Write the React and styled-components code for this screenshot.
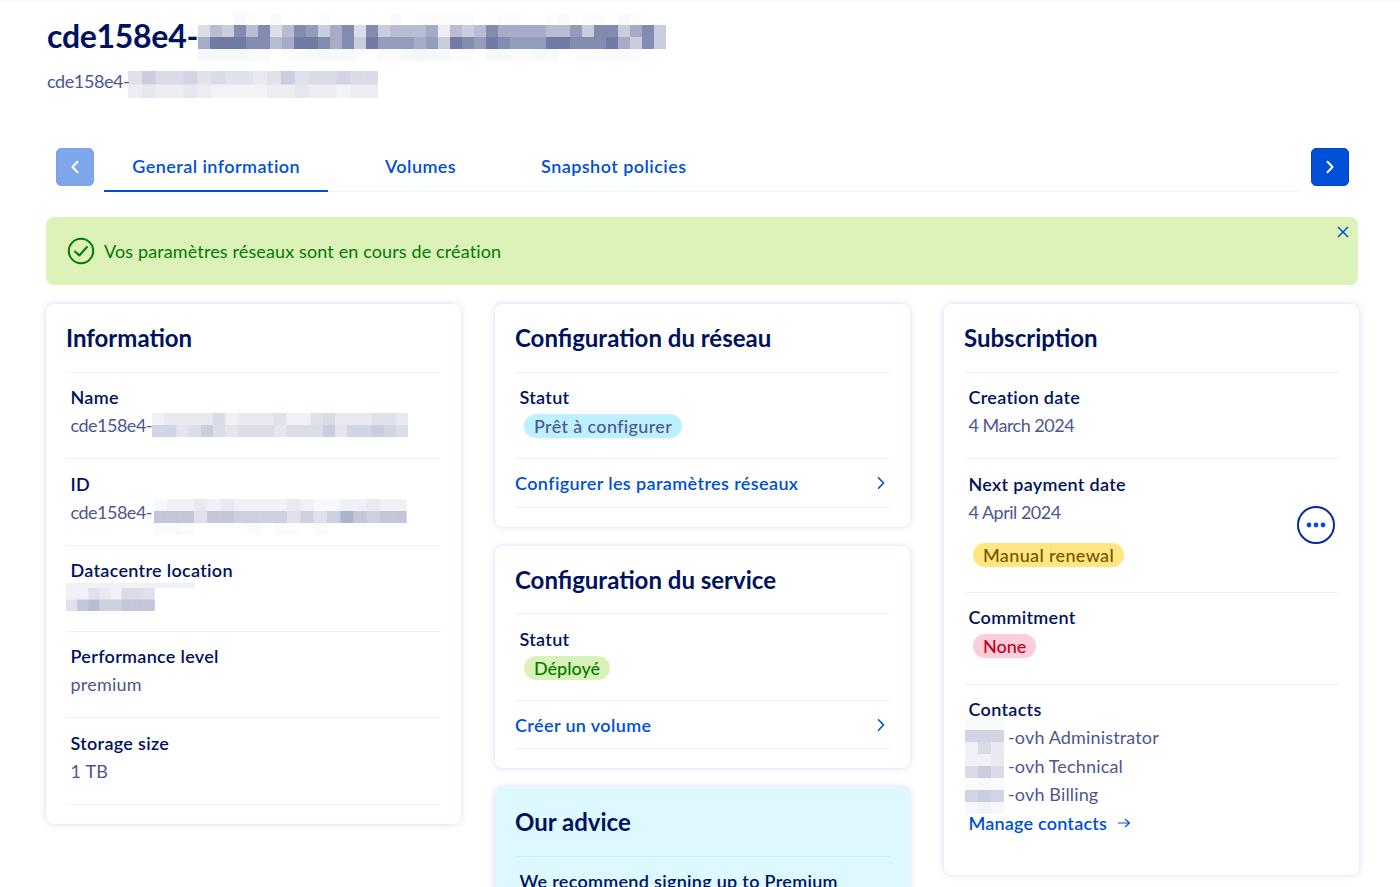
import React from "react";
import styled, { createGlobalStyle } from "styled-components";

const GlobalStyle = createGlobalStyle`
  html, body {
    margin: 0;
    padding: 0;
    background: #fff;
  }
  body {
    font-family: "Lato", "Noto Sans", sans-serif;
    color: #4d5693;
  }
  * {
    box-sizing: border-box;
  }
`;

// the blurred bits of the screenshot: each row is a step of alpha and a string of digits
const Mosaic = ({ cellW, cellH, color = "#00125e", rows, ...rest }) => {
  const width = Math.max(...rows.map((r) => r.cells.length)) * cellW;
  return (
    <MosaicSvg width={width} height={rows.length * cellH} {...rest}>
      {rows.map((row, y) =>
        row.cells.split("").map((c, x) => (
          <rect
            key={`${y}-${x}`}
            x={x * cellW}
            y={y * cellH}
            width={cellW}
            height={cellH}
            fill={color}
            fillOpacity={Number(c) * row.step}
          />
        ))
      )}
    </MosaicSvg>
  );
};

const Chevron = ({ left, weight = 1.6 }) => (
  <svg width="14" height="14" viewBox="0 0 14 14" fill="none">
    <polyline
      points={left ? "9.5,1.8 4.5,7 9.5,12.2" : "4.5,1.8 9.5,7 4.5,12.2"}
      stroke="currentColor"
      strokeWidth={weight}
      strokeLinecap="round"
      strokeLinejoin="round"
    />
  </svg>
);

const titleRows = [
  { step: 0.01, cells: "000310200010000020111110011001201102100" },
  { step: 0.07, cells: "243747247635727344451434755554463773573" },
  { step: 0.07, cells: "588877458875738666563876876668877785373" },
  { step: 0.01, cells: "333322011233310223433110332232011122100" },
];
const subtitleRows = [
  { step: 0.03, cells: "475564544347455655" },
  { step: 0.025, cells: "343343222233433233" },
];
const nameRows = [
  { step: 0.03, cells: "233335233342245333443" },
  { step: 0.035, cells: "553464344434446355654" },
];
const idRows = [
  { step: 0.03, cells: "1223232222321122322" },
  { step: 0.04, cells: "6663665555353586566" },
  { step: 0.01, cells: "2210000201102000000" },
];
const locationRows = [
  { step: 0.03, cells: "22432554" },
  { step: 0.04, cells: "36755666" },
];
const contactRows = [
  { step: 0.01, cells: "222" },
  { step: 0.03, cells: "666" },
  { step: 0.03, cells: "253" },
  { step: 0.03, cells: "223" },
  { step: 0.03, cells: "575" },
  { step: 0.01, cells: "222" },
  { step: 0.03, cells: "676" },
  { step: 0.01, cells: "353" },
];

const App = () => (
  <Page>
    <GlobalStyle />
    <TitleRow>
      <Title>cde158e4-</Title>
      <Mosaic cellW={12} cellH={12} rows={titleRows} />
    </TitleRow>
    <SubtitleRow>
      <span>cde158e4-</span>
      <Mosaic cellW={13.9} cellH={13.5} rows={subtitleRows} />
    </SubtitleRow>

    <TabBar>
      <ArrowButton disabled>
        <Chevron left weight={2} />
      </ArrowButton>
      <TabList>
        <Tab $active>General information</Tab>
        <Tab>Volumes</Tab>
        <Tab>Snapshot policies</Tab>
      </TabList>
      <ArrowButton>
        <Chevron weight={2} />
      </ArrowButton>
    </TabBar>

    <Alert>
      <svg width="28" height="28" viewBox="0 0 28 28" fill="none">
        <circle cx="14" cy="14" r="12.2" stroke="#007a00" strokeWidth="2" />
        <polyline
          points="8,14.5 12.3,18.5 20,10"
          stroke="#007a00"
          strokeWidth="2"
          strokeLinecap="round"
          strokeLinejoin="round"
        />
      </svg>
      <span>Vos paramètres réseaux sont en cours de création</span>
      <CloseButton>
        <svg width="12" height="12" viewBox="0 0 12 12">
          <path d="M1 1 L11 11 M11 1 L1 11" stroke="#0050d7" strokeWidth="1.5" />
        </svg>
      </CloseButton>
    </Alert>

    <Columns>
      <Column>
        <Card>
          <CardTitle>Information</CardTitle>
          <Item>
            <Label>Name</Label>
            <Value $tight>
              cde158e4-
              <Mosaic cellW={12.2} cellH={12} rows={nameRows} />
            </Value>
          </Item>
          <Item>
            <Label>ID</Label>
            <Value $tight>
              cde158e4-
              <IdMosaic cellW={13.3} cellH={12} rows={idRows} />
            </Value>
          </Item>
          <Item>
            <Label>Datacentre location</Label>
            <LocationBlur>
              <FaintStrip />
              <Mosaic cellW={11.1} cellH={11.5} rows={locationRows} />
            </LocationBlur>
          </Item>
          <Item>
            <Label>Performance level</Label>
            <Value>premium</Value>
          </Item>
          <Item>
            <Label>Storage size</Label>
            <Value>1 TB</Value>
          </Item>
        </Card>
      </Column>

      <Column>
        <Card>
          <CardTitle>Configuration du réseau</CardTitle>
          <Item>
            <Label>Statut</Label>
            <BadgeLine>
              <Badge $kind="info">Prêt à configurer</Badge>
            </BadgeLine>
          </Item>
          <LinkRow>
            Configurer les paramètres réseaux
            <Chevron />
          </LinkRow>
        </Card>
        <Card>
          <CardTitle>Configuration du service</CardTitle>
          <Item>
            <Label>Statut</Label>
            <BadgeLine>
              <Badge $kind="success">Déployé</Badge>
            </BadgeLine>
          </Item>
          <LinkRow>
            Créer un volume
            <Chevron />
          </LinkRow>
        </Card>
        <AdviceCard>
          <CardTitle>Our advice</CardTitle>
          <AdviceText>We recommend signing up to Premium</AdviceText>
        </AdviceCard>
      </Column>

      <Column>
        <Card>
          <CardTitle>Subscription</CardTitle>
          <Item>
            <Label>Creation date</Label>
            <Value $tight>4 March 2024</Value>
          </Item>
          <PaymentItem>
            <PaymentInfo>
              <Label>Next payment date</Label>
              <Value $tight>4 April 2024</Value>
              <RenewalLine>
                <Badge $kind="warning">Manual renewal</Badge>
              </RenewalLine>
            </PaymentInfo>
            <MenuButton>
              <svg width="20" height="6" viewBox="0 0 20 6">
                <circle cx="3" cy="3" r="2.4" fill="#0050d7" />
                <circle cx="10" cy="3" r="2.4" fill="#0050d7" />
                <circle cx="17" cy="3" r="2.4" fill="#0050d7" />
              </svg>
            </MenuButton>
          </PaymentItem>
          <CommitmentItem>
            <Label>Commitment</Label>
            <BadgeLine>
              <Badge $kind="error">None</Badge>
            </BadgeLine>
          </CommitmentItem>
          <ContactsItem>
            <Label>Contacts</Label>
            <ContactList>
              <ContactBlur>
                <Mosaic cellW={13} cellH={12} rows={contactRows} />
              </ContactBlur>
              <span>-ovh Administrator</span>
              <span>-ovh Technical</span>
              <span>-ovh Billing</span>
            </ContactList>
            <ManageLink>
              Manage contacts
              <svg width="14" height="12" viewBox="0 0 14 12" fill="none">
                <path
                  d="M1.5 6 H12.5 M8.5 2.5 L12.5 6 L8.5 9.5"
                  stroke="#0050d7"
                  strokeWidth="1.2"
                  strokeLinecap="round"
                  strokeLinejoin="round"
                />
              </svg>
            </ManageLink>
          </ContactsItem>
        </Card>
      </Column>
    </Columns>
  </Page>
);

export default App;

const Page = styled.div`
  height: 887px;
  overflow: hidden;
  padding: 0 42px 0 46px;
  border-top: 2px solid #fafafa;
`;
const MosaicSvg = styled.svg`
  display: block;
  flex-shrink: 0;
`;
const IdMosaic = styled(Mosaic)`
  margin: -1px 0 -12px 2px;
`;
const TitleRow = styled.div`
  display: flex;
  align-items: center;
  margin-top: 11px;
  height: 48px;
`;
const Title = styled.h1`
  margin: -2px 0 0 1px;
  width: 151px;
  font-size: 32px;
  line-height: 40px;
  font-weight: 700;
  letter-spacing: -0.3px;
  color: #00125e;
`;
const SubtitleRow = styled.div`
  display: flex;
  align-items: flex-start;
  margin-top: 10px;
  height: 27px;
  font-size: 18px;
  line-height: 20px;
  letter-spacing: -0.4px;
  color: #4d5693;
  span {
    margin-left: 1px;
    width: 81px;
  }
`;
const TabBar = styled.div`
  display: flex;
  align-items: flex-start;
  margin-top: 50px;
  padding: 0 9px 0 10px;
  gap: 10px;
`;
const ArrowButton = styled.button`
  width: 38px;
  height: 38px;
  flex-shrink: 0;
  display: flex;
  align-items: center;
  justify-content: center;
  padding: 0;
  border: 1px solid #0a3fc4;
  border-radius: 5px;
  background: #0050d7;
  color: #fff;
  &:disabled {
    opacity: 0.5;
  }
`;
const TabList = styled.div`
  flex: 1;
  display: flex;
  gap: 28.5px;
  height: 44px;
  border-bottom: 1px solid #e6f7fd;
`;
const Tab = styled.div`
  height: 44px;
  padding: 6px 28.2px 0;
  font-size: 18px;
  line-height: 24px;
  font-weight: 600;
  letter-spacing: 0.45px;
  color: #0050d7;
  border-bottom: 2px solid ${({ $active }) => ($active ? "#0050d7" : "transparent")};
`;
const Alert = styled.div`
  position: relative;
  display: flex;
  align-items: center;
  gap: 9px;
  height: 68px;
  margin-top: 25px;
  padding: 0 0 1px 21px;
  border-radius: 8px;
  background: #ddf2b8;
  color: #007a00;
  font-size: 18px;
  letter-spacing: 0.125px;
`;
const CloseButton = styled.span`
  position: absolute;
  top: 9px;
  right: 9px;
  display: block;
  height: 12px;
  line-height: 0;
`;
const Columns = styled.div`
  display: grid;
  grid-template-columns: repeat(3, 415px);
  gap: 34px;
  margin-top: 19.2px;
  align-items: start;
`;
const Column = styled.div`
  display: flex;
  flex-direction: column;
  gap: 18.5px;
`;
const Card = styled.section`
  padding: 20px 20px 19.3px;
  border-radius: 8px;
  background: #fff;
  box-shadow: 0 0 6px rgba(70, 80, 220, 0.22);
`;
const AdviceCard = styled(Card)`
  padding-top: 21px;
  height: 200px;
  background: #def8ff;
`;
const CardTitle = styled.h2`
  margin: 0;
  padding-bottom: 19.6px;
  font-size: 24px;
  line-height: 28px;
  font-weight: 700;
  color: #00125e;
  border-bottom: 1px solid #f0f1f6;
  ${AdviceCard} & {
    border-bottom-color: #bef1ff;
  }
`;
const Item = styled.div`
  height: 86.4px;
  padding: 12.4px 4.5px 0;
  border-bottom: 1px solid #f0f1f6;
`;
const PaymentItem = styled(Item)`
  height: 133.7px;
  display: flex;
  align-items: center;
  justify-content: space-between;
  padding-top: 0;
  padding-bottom: 2px;
`;
const PaymentInfo = styled.div`
  align-self: flex-start;
  padding-top: 12.4px;
`;
const CommitmentItem = styled(Item)`
  height: 91.7px;
`;
const ContactsItem = styled(Item)`
  height: 171.1px;
  border-bottom: 0;
`;
const Label = styled.div`
  font-size: 18px;
  line-height: 24px;
  font-weight: 600;
  letter-spacing: 0.3px;
  color: #00125e;
`;
const Value = styled.div`
  display: flex;
  align-items: flex-start;
  height: 24px;
  margin-top: 4px;
  font-size: 18px;
  line-height: 24px;
  letter-spacing: ${({ $tight }) => ($tight ? "-0.5px" : "0.2px")};
  color: #4d5693;
`;
const LocationBlur = styled.div`
  margin: 1px 0 0 -4.5px;
`;
const FaintStrip = styled.div`
  width: 129px;
  height: 5px;
  background: rgba(0, 18, 94, 0.06);
`;
const BadgeLine = styled.div`
  margin-top: 5px;
  padding-left: 4.5px;
  height: 24px;
`;
const RenewalLine = styled(BadgeLine)`
  margin-top: 19px;
`;
const badgeStyles = {
  info: { bg: "#bef1ff", fg: "#4d5693", spacing: "0.35px" },
  success: { bg: "#d8f2b8", fg: "#007a00", spacing: "0" },
  warning: { bg: "#ffe680", fg: "#755400", spacing: "0.35px" },
  error: { bg: "#ffccd9", fg: "#bf0020", spacing: "0" },
};
const Badge = styled.span`
  display: inline-block;
  height: 24px;
  padding: 0 10px;
  border-radius: 12px;
  font-size: 18px;
  line-height: 24px;
  font-weight: 500;
  letter-spacing: ${({ $kind }) => badgeStyles[$kind].spacing};
  background: ${({ $kind }) => badgeStyles[$kind].bg};
  color: ${({ $kind }) => badgeStyles[$kind].fg};
`;
const LinkRow = styled.div`
  display: flex;
  align-items: center;
  justify-content: space-between;
  height: 48.6px;
  padding: 1px 2px 0 0;
  font-size: 18px;
  font-weight: 600;
  letter-spacing: 0.38px;
  color: #0050d7;
  border-bottom: 1px solid #f0f1f6;
`;
const MenuButton = styled.button`
  width: 38px;
  height: 38px;
  flex-shrink: 0;
  display: flex;
  align-items: center;
  justify-content: center;
  padding: 0;
  border: 2px solid #0a2a9e;
  border-radius: 50%;
  background: #fff;
`;
const ContactList = styled.div`
  position: relative;
  display: flex;
  flex-direction: column;
  margin-top: 2px;
  padding-left: 39.5px;
  font-size: 18px;
  line-height: 28.7px;
  letter-spacing: 0.15px;
  color: #4d5693;
`;
const ContactBlur = styled.div`
  position: absolute;
  top: -5px;
  left: -3.5px;
`;
const ManageLink = styled.div`
  display: flex;
  align-items: center;
  gap: 10px;
  margin-top: 2px;
  height: 24px;
  font-size: 18px;
  font-weight: 600;
  letter-spacing: 0.2px;
  color: #0050d7;
`;
const AdviceText = styled.div`
  padding: 12px 4.5px 0;
  font-size: 18px;
  line-height: 24px;
  font-weight: 600;
  letter-spacing: 0.3px;
  color: #00125e;
`;
